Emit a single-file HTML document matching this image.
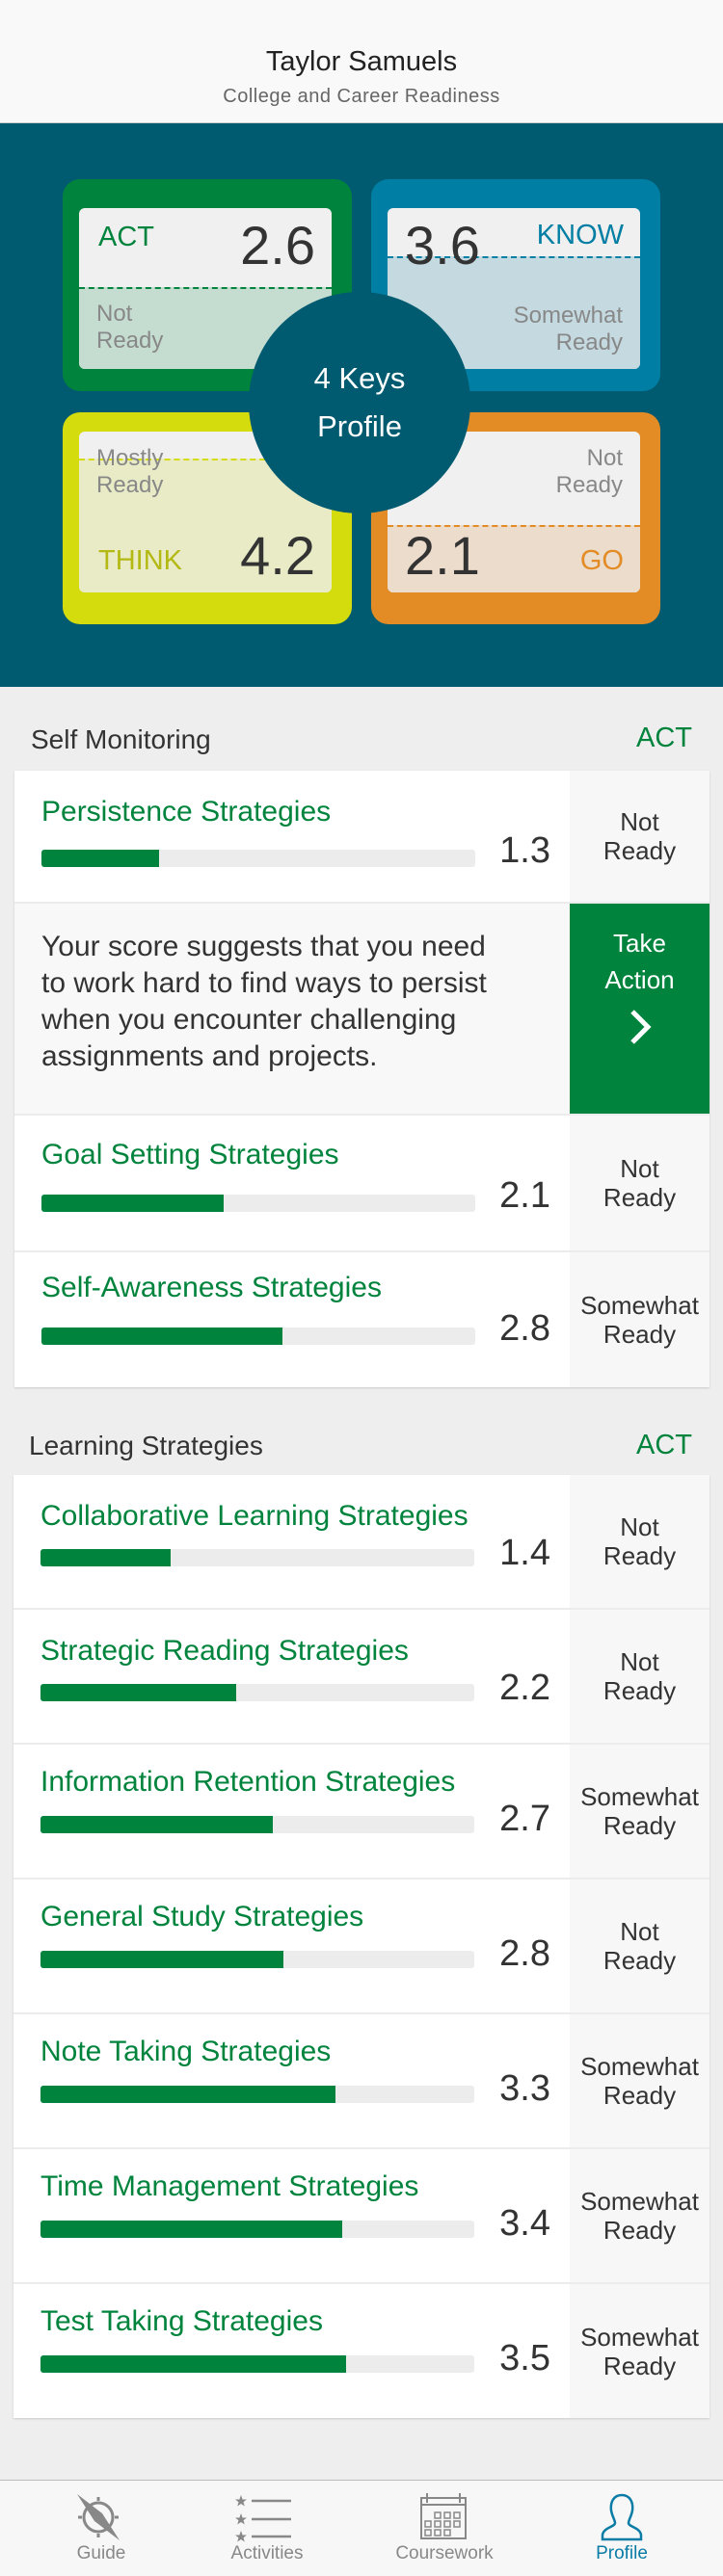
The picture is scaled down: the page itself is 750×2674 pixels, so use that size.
<!DOCTYPE html>
<html><head><meta charset="utf-8"><style>
*{margin:0;padding:0;box-sizing:border-box}
body{width:750px;height:2674px;background:#eeeeee;font-family:"Liberation Sans",sans-serif;position:relative;overflow:hidden}
.abs{position:absolute}
.hdr{left:0;top:0;width:750px;height:128px;background:#f9f9f9;border-bottom:1px solid #ccc;text-align:center}
.hdr .n{position:absolute;top:48px;width:100%;font-size:29px;color:#222}
.hdr .s{position:absolute;top:89px;width:100%;font-size:20px;color:#666;letter-spacing:.5px}
.teal{left:0;top:128px;width:750px;height:585px;background:#005a70}
.card{position:absolute;width:300px;height:220px;border-radius:18px}
.inner{position:absolute;left:17px;top:30px;width:262px;height:167px;border-radius:6px;overflow:hidden;background:#f0f0f0}
.lbl{position:absolute;font-size:29px}
.num{position:absolute;font-size:56px;color:#333}
.st{position:absolute;font-size:24px;color:#888;line-height:28px}
.sec{font-size:28px;color:#333}
.act{font-size:29px;color:#00843d}
.box{position:absolute;background:#fff;box-shadow:0 1px 2px rgba(0,0,0,.15)}
.row{position:absolute;left:0;width:100%;border-bottom:2px solid #ececec}
.row .t{position:absolute;left:28px;font-size:30px;color:#00843d;white-space:nowrap}
.row .bar{position:absolute;left:28px;width:450px;height:18px;background:#ececec;border-radius:3px;overflow:hidden}
.row .bar i{display:block;height:100%;background:#00843d}
.row .v{position:absolute;right:165px;font-size:38px;color:#333}
.row .r{position:absolute;right:0;top:0;bottom:0;width:145px;background:#f7f7f7;display:flex;align-items:center;justify-content:center;text-align:center;font-size:26px;line-height:30px;color:#333}
.tab{position:absolute;top:2574px;left:0;width:750px;height:100px;background:#f7f7f7;border-top:1px solid #bbb}
.ti{position:absolute;top:2640px;font-size:19px;color:#888;text-align:center;width:150px}
</style></head><body>
<div class="abs hdr"><div class="n">Taylor Samuels</div><div class="s">College and Career Readiness</div></div>
<div class="abs teal"></div>

<div class="card" style="left:65px;top:186px;background:#00843d">
 <div class="inner"><div style="position:absolute;left:0;top:82px;width:100%;height:85px;background:#c5ddd0;border-top:2px dashed #00843d"></div>
  <div class="lbl" style="left:20px;top:14px;color:#00843d">ACT</div>
  <div class="num" style="right:17px;top:6px">2.6</div>
  <div class="st" style="left:18px;top:96px">Not<br>Ready</div></div></div>
<div class="card" style="left:385px;top:186px;background:#007ea3">
 <div class="inner"><div style="position:absolute;left:0;top:50px;width:100%;height:117px;background:#c4d9e0;border-top:2px dashed #007ea3"></div>
  <div class="num" style="left:18px;top:6px">3.6</div>
  <div class="lbl" style="right:17px;top:12px;color:#007ea3">KNOW</div>
  <div class="st" style="right:18px;top:98px;text-align:right">Somewhat<br>Ready</div></div></div>
<div class="card" style="left:65px;top:428px;background:#d4dc0e">
 <div class="inner" style="top:20px"><div style="position:absolute;left:0;top:28px;width:100%;height:139px;background:#e8ebc6;border-top:2px dashed #d4dc0e"></div>
  <div class="st" style="left:18px;top:14px">Mostly<br>Ready</div>
  <div class="lbl" style="left:20px;top:118px;color:#b3b812">THINK</div>
  <div class="num" style="right:17px;top:96px">4.2</div></div></div>
<div class="card" style="left:385px;top:428px;background:#e38b24">
 <div class="inner" style="top:20px"><div style="position:absolute;left:0;top:97px;width:100%;height:70px;background:#ebdccb;border-top:2px dashed #e38b24"></div>
  <div class="st" style="right:18px;top:14px;text-align:right">Not<br>Ready</div>
  <div class="num" style="left:18px;top:96px">2.1</div>
  <div class="lbl" style="right:17px;top:118px;color:#e38b24">GO</div></div></div>
<div class="abs" style="left:258px;top:303px;width:230px;height:230px;border-radius:50%;background:#005a70;color:#fff;text-align:center;font-size:31px;line-height:50px;padding-top:65px">4 Keys<br>Profile</div>

<div class="abs sec" style="left:32px;top:752px">Self Monitoring</div>
<div class="abs act" style="right:32px;top:750px">ACT</div>
<div class="box" style="left:15px;top:800px;width:721px;height:640px">
 <div class="row" style="top:0;height:138px"><div class="t" style="top:26px">Persistence Strategies</div><div class="bar" style="top:82px"><i style="width:27%"></i></div><div class="v" style="top:62px">1.3</div><div class="r">Not<br>Ready</div></div>
 <div class="row" style="top:138px;height:220px;background:#f8f8f8"><div style="position:absolute;left:28px;top:26px;font-size:30px;line-height:38px;color:#333;white-space:nowrap">Your score suggests that you need<br>to work hard to find ways to persist<br>when you encounter challenging<br>assignments and projects.</div>
  <div style="position:absolute;right:0;top:0;width:145px;height:218px;background:#00843d;color:#fff;text-align:center;font-size:26px;line-height:38px;padding-top:22px">Take<br>Action<br><svg width="30" height="44" viewBox="0 0 30 44" style="margin-top:8px"><path d="M7 6 L23 22 L7 38" stroke="#fff" stroke-width="5" fill="none"/></svg></div></div>
 <div class="row" style="top:358px;height:142px"><div class="t" style="top:24px">Goal Setting Strategies</div><div class="bar" style="top:82px"><i style="width:42%"></i></div><div class="v" style="top:62px">2.1</div><div class="r">Not<br>Ready</div></div>
 <div class="row" style="top:500px;height:140px;border:0"><div class="t" style="top:20px">Self-Awareness Strategies</div><div class="bar" style="top:78px"><i style="width:55.5%"></i></div><div class="v" style="top:58px">2.8</div><div class="r">Somewhat<br>Ready</div></div>
</div>

<div class="abs sec" style="left:30px;top:1485px">Learning Strategies</div>
<div class="abs act" style="right:32px;top:1484px">ACT</div>
<div class="box" style="left:14px;top:1531px;width:722px;height:979px">
 <div class="row" style="top:0;height:140px"><div class="t" style="top:26px">Collaborative Learning Strategies</div><div class="bar" style="top:77px"><i style="width:30%"></i></div><div class="v" style="top:60px">1.4</div><div class="r">Not<br>Ready</div></div>
 <div class="row" style="top:140px;height:140px"><div class="t" style="top:26px">Strategic Reading Strategies</div><div class="bar" style="top:77px"><i style="width:45%"></i></div><div class="v" style="top:60px">2.2</div><div class="r">Not<br>Ready</div></div>
 <div class="row" style="top:280px;height:140px"><div class="t" style="top:22px">Information Retention Strategies</div><div class="bar" style="top:74px"><i style="width:53.5%"></i></div><div class="v" style="top:56px">2.7</div><div class="r">Somewhat<br>Ready</div></div>
 <div class="row" style="top:420px;height:140px"><div class="t" style="top:22px">General Study Strategies</div><div class="bar" style="top:74px"><i style="width:56%"></i></div><div class="v" style="top:56px">2.8</div><div class="r">Not<br>Ready</div></div>
 <div class="row" style="top:560px;height:140px"><div class="t" style="top:22px">Note Taking Strategies</div><div class="bar" style="top:74px"><i style="width:68%"></i></div><div class="v" style="top:56px">3.3</div><div class="r">Somewhat<br>Ready</div></div>
 <div class="row" style="top:700px;height:140px"><div class="t" style="top:22px">Time Management Strategies</div><div class="bar" style="top:74px"><i style="width:69.5%"></i></div><div class="v" style="top:56px">3.4</div><div class="r">Somewhat<br>Ready</div></div>
 <div class="row" style="top:840px;height:139px;border:0"><div class="t" style="top:22px">Test Taking Strategies</div><div class="bar" style="top:74px"><i style="width:70.5%"></i></div><div class="v" style="top:56px">3.5</div><div class="r">Somewhat<br>Ready</div></div>
</div>

<div class="tab"></div>
<svg class="abs" style="left:78px;top:2588px" width="50" height="50" viewBox="0 0 50 50"><circle cx="24" cy="25" r="15" stroke="#888" stroke-width="3" fill="none"/><path d="M24 8V4M24 42V46M7 25H3M41 25H45" stroke="#888" stroke-width="3"/><path d="M2 1 L28 21 L46 49 L20 29 Z" fill="#888"/></svg>
<svg class="abs" style="left:244px;top:2590px" width="60" height="50" viewBox="0 0 60 50"><g fill="#888"><path d="M6 0L7.6 4.5L12 4.5L8.5 7.2L9.8 11.5L6 9L2.2 11.5L3.5 7.2L0 4.5L4.4 4.5Z"/><path transform="translate(0,19)" d="M6 0L7.6 4.5L12 4.5L8.5 7.2L9.8 11.5L6 9L2.2 11.5L3.5 7.2L0 4.5L4.4 4.5Z"/><path transform="translate(0,37)" d="M6 0L7.6 4.5L12 4.5L8.5 7.2L9.8 11.5L6 9L2.2 11.5L3.5 7.2L0 4.5L4.4 4.5Z"/></g><path d="M17 6H58M17 25H58M17 43H58" stroke="#888" stroke-width="2.5"/></svg>
<svg class="abs" style="left:434px;top:2586px" width="52" height="52" viewBox="0 0 52 52"><rect x="3" y="7" width="46" height="42" fill="none" stroke="#888" stroke-width="2"/><path d="M3 14H49M9 2V12M43 2V12" stroke="#888" stroke-width="2"/><g fill="none" stroke="#888" stroke-width="1.5"><rect x="17" y="22" width="6" height="6"/><rect x="27" y="22" width="6" height="6"/><rect x="37" y="22" width="6" height="6"/><rect x="7" y="31" width="6" height="6"/><rect x="17" y="31" width="6" height="6"/><rect x="27" y="31" width="6" height="6"/><rect x="37" y="31" width="6" height="6"/><rect x="7" y="40" width="6" height="6"/><rect x="17" y="40" width="6" height="6"/><rect x="27" y="40" width="6" height="6"/></g></svg>
<svg class="abs" style="left:622px;top:2588px" width="46" height="50" viewBox="0 0 46 50"><path d="M23 2C14 2 11 10 12 18C13 24 16 28 16 31C16 35 3 36 3 44V48H43V44C43 36 30 35 30 31C30 28 33 24 34 18C35 10 32 2 23 2Z" fill="none" stroke="#0a7ca6" stroke-width="2.5"/></svg>
<div class="ti" style="left:30px">Guide</div>
<div class="ti" style="left:202px">Activities</div>
<div class="ti" style="left:386px">Coursework</div>
<div class="ti" style="left:570px;color:#0a7ca6">Profile</div>
</body></html>
